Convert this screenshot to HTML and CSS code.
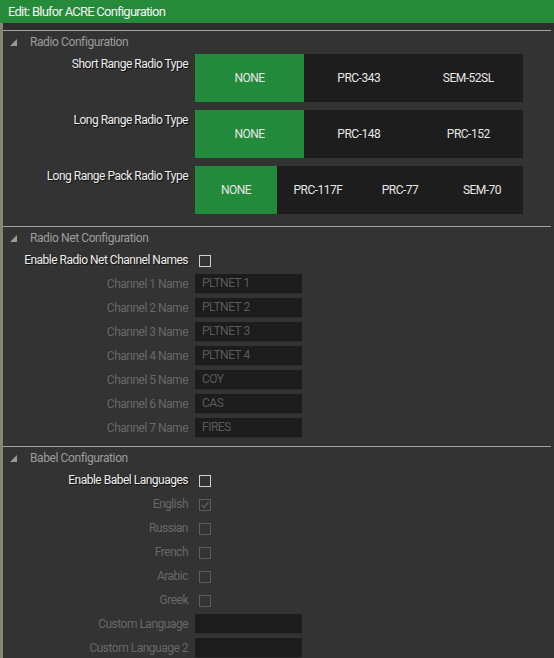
FILE: index.html
```html
<!DOCTYPE html>
<html>
<head>
<meta charset="utf-8">
<link rel="stylesheet" href="styles.css">
</head>
<body>
<div class="window">
  <div class="titlebar">Edit: Blufor ACRE Configuration</div>
  <div class="panel">
    <div class="topgap"></div>

    <section class="section">
      <div class="sec-head"><span class="tri"></span>Radio Configuration</div>
      <div class="rows rows-tool">
        <div class="row row-tool">
          <div class="label">Short Range Radio Type</div>
          <div class="toolbox three">
            <div class="opt sel">NONE</div>
            <div class="opt">PRC-343</div>
            <div class="opt">SEM-52SL</div>
          </div>
        </div>
        <div class="row row-tool">
          <div class="label">Long Range Radio Type</div>
          <div class="toolbox three">
            <div class="opt sel">NONE</div>
            <div class="opt">PRC-148</div>
            <div class="opt">PRC-152</div>
          </div>
        </div>
        <div class="row row-tool">
          <div class="label">Long Range Pack Radio Type</div>
          <div class="toolbox four">
            <div class="opt sel">NONE</div>
            <div class="opt">PRC-117F</div>
            <div class="opt">PRC-77</div>
            <div class="opt">SEM-70</div>
          </div>
        </div>
      </div>
    </section>

    <section class="section">
      <div class="sec-head"><span class="tri"></span>Radio Net Configuration</div>
      <div class="rows rows-net">
        <div class="row"><div class="label">Enable Radio Net Channel Names</div><span class="cb"></span></div>
        <div class="row"><div class="label dis">Channel 1 Name</div><div class="input">PLTNET 1</div></div>
        <div class="row"><div class="label dis">Channel 2 Name</div><div class="input">PLTNET 2</div></div>
        <div class="row"><div class="label dis">Channel 3 Name</div><div class="input">PLTNET 3</div></div>
        <div class="row"><div class="label dis">Channel 4 Name</div><div class="input">PLTNET 4</div></div>
        <div class="row"><div class="label dis">Channel 5 Name</div><div class="input">COY</div></div>
        <div class="row"><div class="label dis">Channel 6 Name</div><div class="input">CAS</div></div>
        <div class="row"><div class="label dis">Channel 7 Name</div><div class="input">FIRES</div></div>
      </div>
    </section>

    <section class="section">
      <div class="sec-head"><span class="tri"></span>Babel Configuration</div>
      <div class="rows">
        <div class="row"><div class="label">Enable Babel Languages</div><span class="cb"></span></div>
        <div class="row"><div class="label dis">English</div><span class="cb cb-dis"><svg viewBox="0 0 12 12" width="10" height="10"><path d="M2 6.2 L4.8 9 L10 2.8" fill="none" stroke="#6a6a6a" stroke-width="1.4"/></svg></span></div>
        <div class="row"><div class="label dis">Russian</div><span class="cb cb-dis"></span></div>
        <div class="row"><div class="label dis">French</div><span class="cb cb-dis"></span></div>
        <div class="row"><div class="label dis">Arabic</div><span class="cb cb-dis"></span></div>
        <div class="row"><div class="label dis">Greek</div><span class="cb cb-dis"></span></div>
        <div class="row"><div class="label dis">Custom Language</div><div class="input"></div></div>
        <div class="row"><div class="label dis">Custom Language 2</div><div class="input"></div></div>
      </div>
    </section>
  </div>
</div>
</body>
</html>
```

FILE: styles.css
```css
html, body {
  margin: 0;
  padding: 0;
}
body {
  width: 554px;
  height: 658px;
  overflow: hidden;
  background: #7f8a74;
  font-family: Roboto, "Liberation Sans", sans-serif;
  font-size: 12px;
  letter-spacing: -0.5px;
}
.window {
  display: flex;
  flex-direction: column;
}
.titlebar {
  height: 23px;
  line-height: 24px;
  background: #258a3a;
  color: #f2f2f2;
  font-size: 13px;
  padding-left: 8px;
  letter-spacing: -0.75px;
}
.panel {
  margin-left: 3px;
  background: #333333;
  height: 635px;
}
.topgap {
  height: 7px;
  background: #2d2d2d;
}
.section {
  border-top: 1px solid #a3a3a3;
  margin-right: 3px;
}
.sec-head {
  height: 21px;
  display: flex;
  align-items: center;
  color: #9c9c9c;
  font-size: 12px;
  letter-spacing: -0.4px;
  padding-left: 7px;
}
.tri {
  width: 0;
  height: 0;
  border-left: 7px solid transparent;
  border-bottom: 7px solid #9a9a9a;
  margin-right: 13px;
  margin-top: 2px;
}
.rows {
  display: flex;
  flex-direction: column;
}
.rows-tool {
  padding-top: 2px;
  padding-bottom: 12px;
  gap: 8px;
}
.rows-net {
  padding-bottom: 6px;
}
.row {
  display: grid;
  grid-template-columns: 185px auto;
  column-gap: 7px;
  align-items: center;
  justify-items: start;
  height: 24px;
}
.row-tool {
  height: 48px;
  align-items: start;
}
.row-tool .label {
  line-height: 20px;
}
.label {
  justify-self: end;
  text-align: right;
  color: #ececec;
  text-shadow: 1px 1px 1px rgba(0,0,0,0.7);
  white-space: nowrap;
}
.label.dis {
  color: #686868;
  text-shadow: none;
}
.toolbox {
  width: 328px;
  height: 48px;
  background: #1d1d1d;
  display: grid;
}
.toolbox.three { grid-template-columns: 109px 1fr 1fr; }
.toolbox.four { grid-template-columns: repeat(4, 1fr); }
.opt {
  display: flex;
  align-items: center;
  justify-content: center;
  color: #e6e6e6;
}
.opt.sel {
  background: #248a3b;
}
.cb {
  width: 10px;
  height: 10px;
  border: 1px solid #d0d0d0;
  margin-left: 4px;
  margin-top: 2px;
  display: flex;
  align-items: center;
  justify-content: center;
}
.cb-dis {
  border-color: #5c5c5c;
}
.input {
  width: 100px;
  height: 19px;
  line-height: 19px;
  background: #1c1c1c;
  color: #5a5a5a;
  padding-left: 7px;
  border-bottom: 1px solid #2a2a2a;
}
```
